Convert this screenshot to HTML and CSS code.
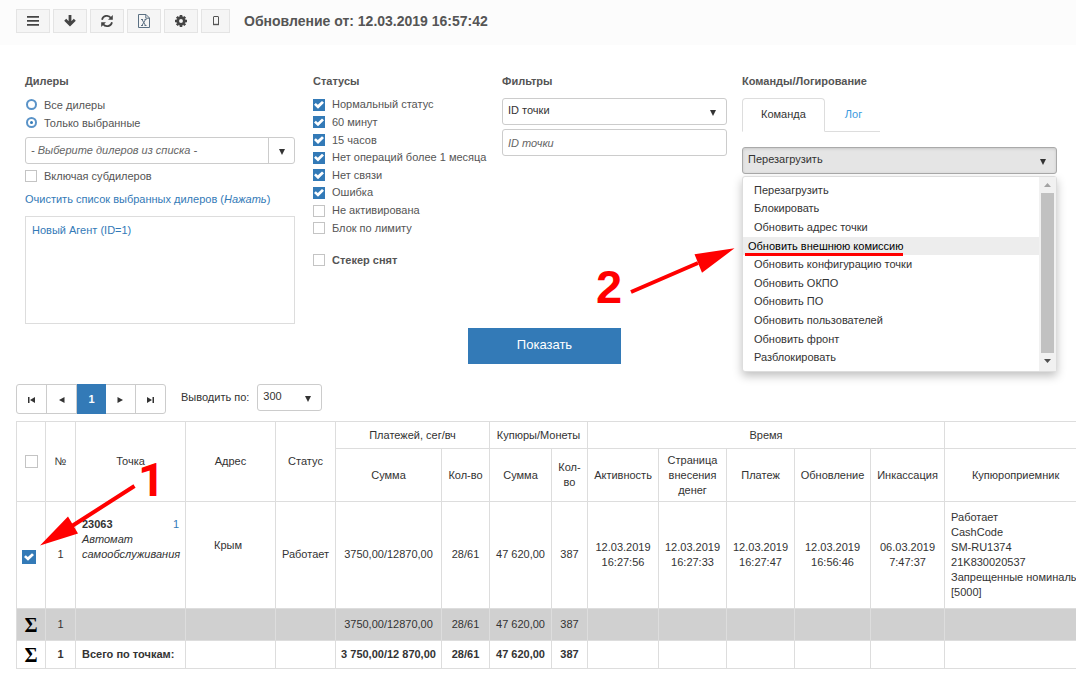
FILE: index.html
```html
<!DOCTYPE html>
<html lang="ru">
<head>
<meta charset="utf-8">
<meta name="viewport" content="width=device-width, initial-scale=1">
<title>Мониторинг точек</title>
<link rel="stylesheet" href="styles.css">
</head>
<body>
<header class="topbar">
  <button class="tool" type="button" aria-label="Меню"><svg width="14" height="14" viewBox="0 0 14 14"><path d="M1 2.8h12M1 6.8h12M1 10.8h12" stroke="#444" stroke-width="1.7"/></svg></button>
  <button class="tool" type="button" aria-label="Вниз"><svg width="14" height="14" viewBox="0 0 14 14"><path d="M7 1v9M2.200 5.700L7 10.500l4.800-4.800" fill="none" stroke="#444" stroke-width="2.800"/></svg></button>
  <button class="tool" type="button" aria-label="Обновить"><svg width="14" height="14" viewBox="0 0 14 14"><path d="M2 5.800A5 5 0 0 1 11 4M12 8.200A5 5 0 0 1 3 10" fill="none" stroke="#444" stroke-width="1.700"/><path d="M12.800 1v4.800H8zM1.200 13V8.200H6z" fill="#444"/></svg></button>
  <button class="tool" type="button" aria-label="Экспорт в Excel"><svg width="14" height="14" viewBox="0 0 14 14"><path d="M1.500.5h7.500l3.500 3.500v9.500h-11zM8.800.5v3.700h3.700" fill="none" stroke="#5b7083"/><path d="M4 5.500h2M7.500 5.500h2M4 11.500h2M7.500 11.500h2M5 5.500l3.500 6M8.500 5.500L5 11.500" fill="none" stroke="#5b7083"/></svg></button>
  <button class="tool" type="button" aria-label="Настройки"><svg width="14" height="14" viewBox="0 0 14 14"><circle cx="7" cy="7" r="3.300" fill="none" stroke="#444" stroke-width="2.700"/><path d="M7 1v2M7 11v2M1 7h2M11 7h2M2.800 2.800l1.400 1.400M9.800 9.800l1.400 1.400M2.800 11.200l1.400-1.400M9.800 4.200l1.400-1.400" stroke="#444" stroke-width="2.600"/></svg></button>
  <button class="tool tool-narrow" type="button" aria-label="Телефон"><svg width="14" height="14" viewBox="0 0 14 14"><rect x="4.500" y="2.500" width="5" height="8" rx=".5" fill="none" stroke="#555"/><path d="M4 10.500h6" stroke="#555" stroke-width="1.400"/></svg></button>
  <h1 class="updated">Обновление от: 12.03.2019 16:57:42</h1>
</header>

<main>
<form class="filters">
  <section class="dealers">
    <h2 class="title">Дилеры</h2>
    <label class="opt"><input type="radio" name="dealers"><span>Все дилеры</span></label>
    <label class="opt"><input type="radio" name="dealers" checked><span>Только выбранные</span></label>
    <div class="combo">
      <input type="text" placeholder="- Выберите дилеров из списка -" aria-label="Дилеры">
      <button type="button" aria-label="Открыть список"><svg class="caret" width="6" height="6" viewBox="0 0 6 6"><path d="M0 0h6L3 6z"/></svg></button>
    </div>
    <label class="opt opt-sub"><input type="checkbox"><span>Включая субдилеров</span></label>
    <a class="clear" href="#">Очистить список выбранных дилеров (<em>Нажать</em>)</a>
    <div class="chosen"><a href="#">Новый Агент (ID=1)</a></div>
  </section>

  <section class="statuses">
    <h2 class="title">Статусы</h2>
    <div class="status-list">
      <label class="opt"><input type="checkbox" checked><span>Нормальный статус</span></label>
      <label class="opt"><input type="checkbox" checked><span>60 минут</span></label>
      <label class="opt"><input type="checkbox" checked><span>15 часов</span></label>
      <label class="opt"><input type="checkbox" checked><span>Нет операций более 1 месяца</span></label>
      <label class="opt"><input type="checkbox" checked><span>Нет связи</span></label>
      <label class="opt"><input type="checkbox" checked><span>Ошибка</span></label>
      <label class="opt"><input type="checkbox"><span>Не активирована</span></label>
      <label class="opt"><input type="checkbox"><span>Блок по лимиту</span></label>
    </div>
    <label class="opt stacker"><input type="checkbox"><span>Стекер снят</span></label>
  </section>

  <section class="fields">
    <h2 class="title">Фильтры</h2>
    <div class="stack">
      <div class="select"><select aria-label="Фильтр"><option>ID точки</option></select><svg class="caret" width="6" height="6" viewBox="0 0 6 6"><path d="M0 0h6L3 6z"/></svg></div>
      <input class="text" type="text" placeholder="ID точки" aria-label="ID точки">
    </div>
  </section>

  <section class="commands">
    <h2 class="title">Команды/Логирование</h2>
    <div class="tabs" role="tablist">
      <button class="tab tab-on" type="button" role="tab" aria-selected="true">Команда</button>
      <button class="tab" type="button" role="tab" aria-selected="false">Лог</button>
    </div>
    <div class="picker">
      <div class="select select-open"><select aria-label="Команда"><option>Перезагрузить</option></select><svg class="caret" width="6" height="6" viewBox="0 0 6 6"><path d="M0 0h6L3 6z"/></svg></div>
      <div class="menu">
        <ul role="listbox" aria-label="Список команд">
          <li role="option">Перезагрузить</li>
          <li role="option">Блокировать</li>
          <li role="option">Обновить адрес точки</li>
          <li role="option" class="hot" aria-selected="true">Обновить внешнюю комиссию</li>
          <li role="option">Обновить конфигурацию точки</li>
          <li role="option">Обновить ОКПО</li>
          <li role="option">Обновить ПО</li>
          <li role="option">Обновить пользователей</li>
          <li role="option">Обновить фронт</li>
          <li role="option">Разблокировать</li>
        </ul>
        <div class="scroll">
          <svg width="7" height="4" viewBox="0 0 7 4"><path d="M0 4h7L3.500 0z" fill="#a3a3a3"/></svg>
          <span class="thumb"></span>
          <svg width="7" height="4" viewBox="0 0 7 4"><path d="M0 0h7L3.500 4z" fill="#505050"/></svg>
        </div>
      </div>
    </div>
  </section>
  <button class="show" type="submit">Показать</button>
</form>

<div class="paging">
  <nav class="pager" aria-label="Страницы">
    <button type="button" aria-label="Первая"><svg width="7" height="6" viewBox="0 0 7 6"><path d="M0 0h1.500v6H0zM7 0v6L2 3z"/></svg></button>
    <button type="button" aria-label="Назад"><svg width="7" height="6" viewBox="0 0 7 6"><path d="M6.500 0v6L1 3z"/></svg></button>
    <button class="now" type="button" aria-current="page">1</button>
    <button type="button" aria-label="Вперёд"><svg width="7" height="6" viewBox="0 0 7 6"><path d="M.5 0v6L6 3z"/></svg></button>
    <button type="button" aria-label="Последняя"><svg width="7" height="6" viewBox="0 0 7 6"><path d="M5.500 0H7v6H5.500zM0 0v6l5-3z"/></svg></button>
  </nav>
  <label for="size">Выводить по:</label>
  <div class="select select-size"><select id="size"><option>300</option></select><svg class="caret" width="6" height="6" viewBox="0 0 6 6"><path d="M0 0h6L3 6z"/></svg></div>
</div>

<div class="grid-wrap">
<table class="grid">
  <colgroup><col class="w29"><col class="w30"><col class="w110"><col class="w90"><col class="w60"><col class="w106"><col class="w48"><col class="w62"><col class="w36"><col class="w71"><col class="w68"><col class="w68"><col class="w76"><col class="w74"><col class="w142"></colgroup>
  <thead>
    <tr class="r-group">
      <th rowspan="2"><input type="checkbox" class="big" aria-label="Выбрать все"></th>
      <th rowspan="2">№</th><th rowspan="2">Точка</th><th rowspan="2">Адрес</th><th rowspan="2">Статус</th>
      <th colspan="2">Платежей, сег/вч</th><th colspan="2">Купюры/Монеты</th><th colspan="5">Время</th><th></th>
    </tr>
    <tr class="r-head">
      <th>Сумма</th><th>Кол-во</th><th>Сумма</th><th>Кол-<br>во</th><th>Активность</th><th>Страница внесения денег</th><th>Платеж</th><th>Обновление</th><th>Инкассация</th><th>Купюроприемник</th>
    </tr>
  </thead>
  <tbody>
    <tr class="r-data">
      <td class="pick"><input type="checkbox" class="big" checked aria-label="Выбрать точку 23063"></td>
      <td>1</td>
      <td class="point"><div class="point-id"><b>23063</b><a href="#">1</a></div><em>Автомат самообслуживания</em></td>
      <td class="addr">Крым</td><td>Работает</td><td>3750,00/12870,00</td><td>28/61</td><td>47 620,00</td><td>387</td>
      <td>12.03.2019 16:27:56</td><td>12.03.2019 16:27:33</td><td>12.03.2019 16:27:47</td><td>12.03.2019 16:56:46</td><td>06.03.2019 7:47:37</td>
      <td class="left">Работает<br>CashCode<br>SM-RU1374<br>21K830020537<br>Запрещенные номиналы<br>[5000]</td>
    </tr>
    <tr class="r-sum">
      <td class="sigma">Σ</td><td>1</td><td></td><td></td><td></td><td>3750,00/12870,00</td><td>28/61</td><td>47 620,00</td><td>387</td><td></td><td></td><td></td><td></td><td></td><td></td>
    </tr>
    <tr class="r-total">
      <td class="sigma">Σ</td><td>1</td><td class="left">Всего по точкам:</td><td></td><td></td><td>3 750,00/12 870,00</td><td>28/61</td><td>47 620,00</td><td>387</td><td></td><td></td><td></td><td></td><td></td><td></td>
    </tr>
  </tbody>
</table>
</div>
</main>

<svg class="marks" width="1076" height="673" viewBox="0 0 1076 673" fill="#f00" aria-hidden="true">
  <path d="M134.500 486L72 526M631 292l67-29" stroke="#f00" stroke-width="4"/>
  <path d="M40 545.500l28-29 10 17zM734.500 248.300l-40 6 7.500 18.500z"/>
  <path d="M745 253h158v3H745z"/>
  <text class="mark-one" x="138" y="496">1</text>
  <text x="596" y="303">2</text>
</svg>
</body>
</html>
```
FILE: styles.css
```css
* { box-sizing: border-box; }

body {
  margin: 0;
  position: relative;
  background: #fff;
  color: #333;
  font: 11px/15px "Liberation Sans", Arial, sans-serif;
  overflow-x: hidden;
}

button, input, select { font: inherit; color: inherit; margin: 0; }
a { color: #337ab7; text-decoration: none; }

/* top bar */
.topbar {
  display: flex;
  align-items: center;
  gap: 3px;
  height: 45px;
  padding: 0 16px 3px;
  background: #fcfcfc;
}
.tool {
  display: flex;
  align-items: center;
  justify-content: center;
  width: 34px;
  height: 24px;
  padding: 0 0 1px;
  border: 1px solid #e4e4e4;
  background: #f5f5f5;
}
.tool-narrow { width: 29px; }
.updated { margin: 0 0 0 11px; font-size: 14px; line-height: 18px; color: #555; }

/* filters */
.filters {
  display: grid;
  grid-template-columns: 288fr 189fr 240fr 315fr;
  padding: 28px 19px 0 25px;
  color: #555;
}
.title { margin: 0 0 7px; font-size: 11px; line-height: 16px; }
.opt { display: flex; align-items: center; gap: 7px; height: 18px; white-space: nowrap; }

input[type="checkbox"], input[type="radio"] {
  appearance: none;
  flex: none;
  width: 12px;
  height: 12px;
  border: 1px solid #c4c4c4;
  background: #fff;
  display: grid;
  place-items: center;
}
input[type="checkbox"]:checked { background: #337ab7; border-color: #337ab7; }
input[type="checkbox"]:checked::before {
  content: "";
  width: 10px;
  height: 8px;
  background: #fff;
  clip-path: polygon(0 50%, 18% 28%, 38% 50%, 80% 2%, 100% 24%, 40% 98%);
}
input[type="radio"] { width: 11px; height: 11px; border: 2px solid #5a93c8; border-radius: 50%; margin: 0 1px 2px; }
.dealers .opt input[type="radio"] + span { margin-left: -1px; }
input[type="radio"]:checked::before { content: ""; width: 3px; height: 3px; border-radius: 50%; background: #337ab7; }
input.big { width: 13px; height: 13px; margin: 0 auto; }
input.big:checked { width: 14px; height: 14px; }

.dealers { padding-right: 18px; }
.combo { display: flex; height: 27px; margin-top: 5px; border: 1px solid #ccc; border-radius: 3px; }
.combo input { flex: 1; min-width: 0; border: 0; padding: 0 5px; background: none; }
.combo button { width: 26px; padding: 3px 0 0; border: 0; border-left: 1px solid #ccc; background: none; display: flex; align-items: center; justify-content: center; }
::placeholder { color: #666; opacity: 1; font-style: italic; }
.opt-sub { margin-top: 3px; }
.clear { display: block; margin-top: 5px; line-height: 18px; white-space: nowrap; }
.chosen { height: 108px; margin-top: 8px; padding: 6px; border: 1px solid #ddd; }

.status-list { display: grid; grid-template-rows: repeat(8, 1fr); height: 141px; }
.status-list .opt { height: auto; }
.stacker { margin-top: 14px; font-weight: bold; }

.fields { padding-right: 15px; }
.stack { display: grid; gap: 4px; padding-top: 2px; }
.select { display: grid; grid-template-columns: 1fr 28px; align-items: center; height: 27px; }
.select select {
  grid-area: 1 / 1 / 2 / 3;
  appearance: none;
  width: 100%;
  height: 27px;
  padding: 0 5px 2px;
  border: 1px solid #ccc;
  border-radius: 3px;
  background: #fff;
  color: #333;
}
.select .caret { grid-area: 1 / 2; justify-self: center; margin-top: 3px; pointer-events: none; }
.caret, .pager svg { fill: #333; }
.select-open select { background: #e5e5e5; border-color: #aaa; box-shadow: inset 0 1px 3px rgba(0, 0, 0, .13); }
.text { width: 100%; height: 27px; padding: 0 5px; border: 1px solid #ccc; border-radius: 3px; }

.tabs { display: flex; padding-top: 2px; }
.tab { height: 34px; padding: 0 18px 0 20px; border: 0; border-bottom: 1px solid #ddd; background: none; color: #3a9ade; }
.tab-on { padding: 0 18px 2px; border: 1px solid #ddd; border-bottom-color: #fff; border-radius: 4px 4px 0 0; color: #333; }
.picker { position: relative; margin-top: 15px; }
.menu {
  position: absolute;
  top: 29px;
  left: 0;
  right: 0;
  display: flex;
  border: 1px solid #ddd;
  border-radius: 3px;
  background: #fff;
  box-shadow: 0 4px 10px rgba(0, 0, 0, .25);
}
.menu ul { flex: 1; display: grid; grid-template-rows: repeat(10, 1fr); height: 194px; margin: 0; padding: 4px 0; list-style: none; color: #333; }
.menu li { display: flex; align-items: center; padding-left: 11px; }
.menu .hot { padding-left: 5px; background: #ededed; color: #000; }
.scroll { display: flex; flex-direction: column; align-items: center; gap: 6px; width: 17px; padding: 6px 0 8px; background: #f1f1f1; }
.thumb { flex: 1; width: 13px; background: #c1c1c1; }

.show {
  grid-column: 1 / -1;
  justify-self: center;
  width: 153px;
  height: 36px;
  margin: 4px 0 0 7px;
  padding: 0 0 3px;
  border: 0;
  background: #337ab7;
  color: #fff;
  font-size: 13px;
}

/* paging */
.paging { display: flex; padding: 20px 16px 7px; }
.pager { display: flex; width: 150px; height: 30px; border: 1px solid #ccc; border-radius: 3px; }
.pager button { flex: 1; display: flex; align-items: center; justify-content: center; padding: 2px 0 0; border: 0; border-right: 1px solid #ccc; background: none; }
.pager button:last-child { border-right: 0; }
.pager .now { margin: -1px 0; padding: 0; background: #337ab7; color: #fff; font-weight: bold; border: 0; }
.paging label { margin: 0 8px 0 15px; line-height: 27px; }
.select-size { width: 65px; }

/* table */
.grid-wrap { padding-left: 16px; overflow: hidden; }
.grid { width: 1070px; table-layout: fixed; border-collapse: collapse; }
.grid th, .grid td { padding: 0 2px; border: 1px solid #ddd; font-weight: normal; text-align: center; vertical-align: middle; }
.w29 { width: 29px; } .w30 { width: 30px; } .w36 { width: 36px; } .w48 { width: 48px; }
.w60 { width: 60px; } .w62 { width: 62px; } .w68 { width: 68px; } .w71 { width: 71px; }
.w74 { width: 74px; } .w76 { width: 76px; } .w90 { width: 90px; } .w106 { width: 106px; }
.w110 { width: 110px; } .w142 { width: 142px; }
.r-group { height: 27px; }
.r-head { height: 53px; }
.r-data { height: 107px; }
.r-sum { height: 32px; background: #d0d0d0; }
.r-total { height: 28px; }
.r-data > td { padding-bottom: 1px; }
.grid .r-total td { font-weight: bold; }
.grid .left { padding-left: 6px; text-align: left; white-space: nowrap; }
.grid .pick { padding: 4px 4px 0 0; }
.grid .point { padding: 0 6px 32px; text-align: left; }
.point-id { display: flex; justify-content: space-between; }
.grid .addr { padding: 0 5px 19px 0; }
.grid .sigma { color: #000; font: bold 20px/20px "Liberation Serif", "Times New Roman", serif; }

/* callouts drawn over the page */
.marks { position: absolute; top: 0; left: 0; pointer-events: none; font: bold 47px "Liberation Sans", Arial, sans-serif; }
.mark-one { font-family: Roboto, sans-serif; }
```
